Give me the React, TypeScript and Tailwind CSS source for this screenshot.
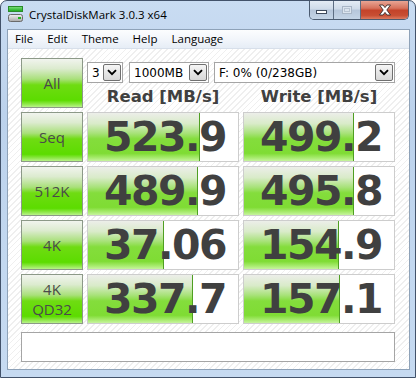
import React from "react";

type Row = { label: string[]; read: string; rw: number; write: string; ww: number };

const rows: Row[] = [
  { label: ["Seq"], read: "523.9", rw: 112, write: "499.2", ww: 110 },
  { label: ["512K"], read: "489.9", rw: 110, write: "495.8", ww: 110 },
  { label: ["4K"], read: "37.06", rw: 76, write: "154.9", ww: 95 },
  { label: ["4K", "QD32"], read: "337.7", rw: 105, write: "157.1", ww: 96 },
];

function GreenButton({ lines }: { lines: string[] }) {
  return (
    <div className="h-[50px] border border-[#8c9988] bg-[linear-gradient(to_bottom,#f1f4ee_0%,#dcebcf_20%,#a9e07a_42%,#6fdc12_54%,#5cdc00_86%,#8fe84a_94%,#b9f28a_100%)] flex flex-col items-center justify-center text-[#4a4a4a] text-[15px] font-['Open_Sans',sans-serif]">
      {lines.map((l) => (
        <span key={l} className="block h-[20px] leading-[20px]">
          {l}
        </span>
      ))}
    </div>
  );
}

function Bar({ value, width }: { value: string; width: number }) {
  return (
    <div className="relative h-[50px] border border-[#cdcdcd] bg-white">
      <div
        className="absolute left-0 top-0 bottom-0 border-r border-[#4f9f22] bg-[linear-gradient(to_bottom,#eceee9_0%,#d9ebc9_22%,#a8e27a_42%,#84dd3c_54%,#7fdc34_84%,#a6ea6c_93%,#c6f49e_100%)]"
        style={{ width }}
      />
      <div className="relative h-full flex items-center justify-center pl-[4px] text-[#404040] text-[41px] font-bold tracking-[-1.5px] leading-none font-['DejaVu_Sans',sans-serif]">
        {value}
      </div>
    </div>
  );
}

function Combo({ text, className }: { text: string; className: string }) {
  return (
    <div className={`h-[21px] border border-[#a5a5a5] bg-white flex items-center ${className}`}>
      <span className="flex-1 pl-[4px] text-[12px] leading-none text-black whitespace-nowrap overflow-hidden font-['DejaVu_Sans',sans-serif]">
        {text}
      </span>
      <div className="mr-[1px] w-[18px] h-[17px] border border-[#707070] rounded-[2px] bg-[linear-gradient(to_bottom,#f6f6f6,#e6e6e6_50%,#d8d8d8)] flex items-center justify-center">
        <svg width="10" height="7" viewBox="0 0 10 7">
          <path d="M1 1.2 L5 5.2 L9 1.2" fill="none" stroke="#000" strokeWidth="1.9" />
        </svg>
      </div>
    </div>
  );
}

function AppIcon() {
  return (
    <svg width="15" height="16" viewBox="0 0 15 16">
      <defs>
        <linearGradient id="g1" x1="0" y1="0" x2="0" y2="1">
          <stop offset="0" stopColor="#7fe07f" />
          <stop offset="1" stopColor="#18a818" />
        </linearGradient>
        <linearGradient id="g2" x1="0" y1="0" x2="0" y2="1">
          <stop offset="0" stopColor="#f2f2f2" />
          <stop offset="1" stopColor="#a8a8a8" />
        </linearGradient>
      </defs>
      <rect x="0.5" y="0.5" width="14" height="5" fill="url(#g1)" stroke="#2a8a2a" />
      <rect x="0.5" y="8.5" width="14" height="7" rx="2" fill="url(#g2)" stroke="#6a6a6a" />
      <rect x="10" y="11" width="3" height="2" fill="#22b522" />
    </svg>
  );
}

export default function App() {
  return (
    <div className="w-[416px] h-[378px] bg-white">
      <div className="w-[416px] h-[378px] flex flex-col border border-[#42526a] rounded-t-[7px] overflow-hidden bg-[linear-gradient(to_bottom,#c9dcf2,#bcd2ec_30%,#c3d8f0_70%,#c6daf1)]">
        {/* title bar */}
        <div className="h-[28px] flex items-start">
          <div className="ml-[7px] mt-[5px]">
            <AppIcon />
          </div>
          <div className="ml-[6px] mt-[6px] text-[11.5px] leading-[16px] text-black font-['Open_Sans',sans-serif]">
            CrystalDiskMark 3.0.3 x64
          </div>
          <div className="ml-auto mr-[6px] flex h-[19px] border border-t-0 border-[#4b5b70] rounded-b-[5px] overflow-hidden">
            <div className="w-[24px] border-r border-[#5d6d82] bg-[linear-gradient(to_bottom,#e4ecf5,#cfdbe9_45%,#b6c6da_50%,#c4d4e6)] flex items-center justify-center">
              <div className="mt-[4px] w-[11px] h-[4px] bg-white border border-[#3e4a5c]" />
            </div>
            <div className="w-[27px] border-r border-[#5d6d82] bg-[linear-gradient(to_bottom,#e4ecf5,#cfdbe9_45%,#b6c6da_50%,#c4d4e6)] flex items-center justify-center">
              <div className="w-[10px] h-[8px] border border-[#a9b6c6] bg-[#dbe4ee] flex items-start justify-center">
                <div className="mt-[1px] w-[6px] h-[4px] border border-[#b8c4d2]" />
              </div>
            </div>
            <div className="w-[47px] bg-[linear-gradient(to_bottom,#e8a594,#d6725c_40%,#c4432a_52%,#c84e33_80%,#dc7a60)] flex items-center justify-center">
              <svg width="14" height="12" viewBox="0 0 14 12">
                <path
                  d="M1.5 1 H5 L7 3.6 L9 1 H12.5 L8.8 6 L12.5 11 H9 L7 8.4 L5 11 H1.5 L5.2 6 Z"
                  fill="#ffffff"
                  stroke="#3a2a28"
                  strokeWidth="0.9"
                  strokeLinejoin="round"
                />
              </svg>
            </div>
          </div>
        </div>

        {/* client area */}
        <div className="ml-[6px] mr-[5px] flex-1 flex flex-col border border-[#8ea2b8] bg-white">
          <div className="h-[19px] flex items-center border-b border-[#d7dfea] bg-[linear-gradient(to_bottom,#fcfdfe,#f0f4fa_60%,#e6edf6)] text-[11.5px] text-black font-['Open_Sans',sans-serif]">
            {["File", "Edit", "Theme", "Help", "Language"].map((m) => (
              <span key={m} className="px-[7px] leading-[18px]">
                {m}
              </span>
            ))}
          </div>
          <div className="flex-1 pl-[13px] pt-[9px] bg-[repeating-linear-gradient(135deg,#ffffff_0px,#ffffff_3px,#efefef_3px,#efefef_4.2px)]">
            <div className="grid grid-cols-[62px_152px_152px] gap-[4px]">
              <GreenButton lines={["All"]} />
              <div className="col-span-2 flex flex-col">
                <div className="mt-[4px] flex">
                  <Combo text="3" className="w-[36px]" />
                  <Combo text="1000MB" className="ml-[6px] w-[80px]" />
                  <Combo text="F: 0% (0/238GB)" className="ml-[5px] flex-1" />
                </div>
                <div className="mt-[4px] grid grid-cols-2 gap-[4px] text-[16.5px] leading-[20px] font-bold text-[#404040] font-['DejaVu_Sans',sans-serif]">
                  <div className="text-center">Read [MB/s]</div>
                  <div className="text-center">Write [MB/s]</div>
                </div>
              </div>
              {rows.map((r) => (
                <React.Fragment key={r.label.join(" ")}>
                  <GreenButton lines={r.label} />
                  <Bar value={r.read} width={r.rw} />
                  <Bar value={r.write} width={r.ww} />
                </React.Fragment>
              ))}
            </div>
            <div className="mt-[8px] w-[374px] h-[30px] border border-[#a5a5a5] bg-white" />
          </div>
        </div>
        <div className="h-[7px]" />
      </div>
    </div>
  );
}
